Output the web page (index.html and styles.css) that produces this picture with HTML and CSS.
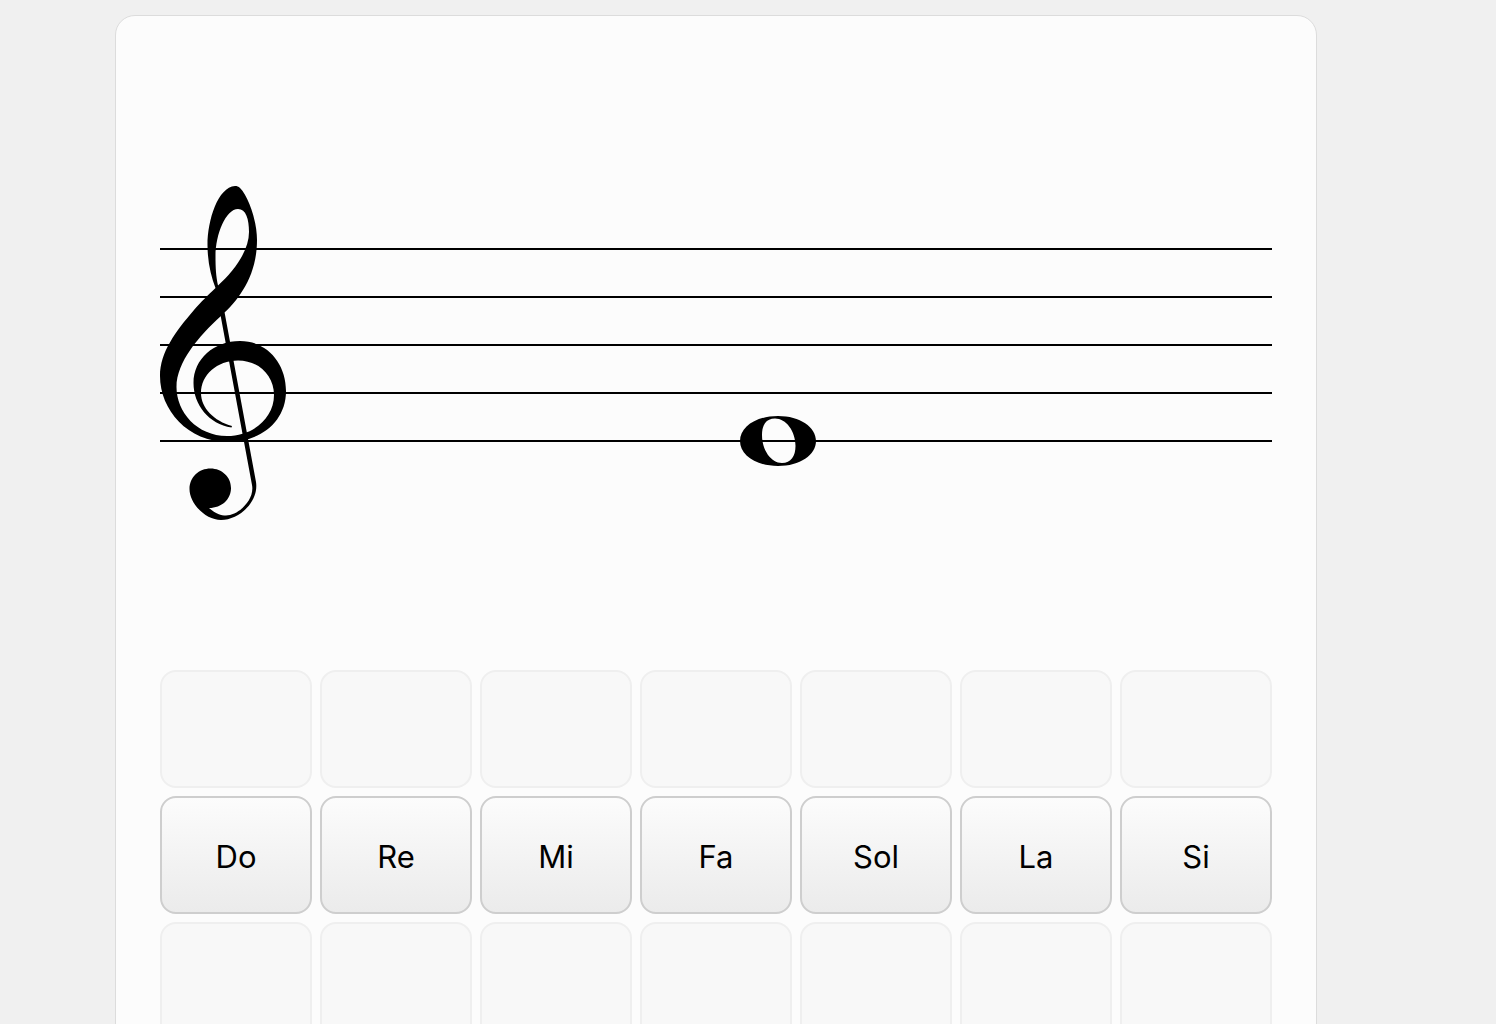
FILE: index.html
```
<!DOCTYPE html>
<html lang="es">
<head>
    <meta charset="UTF-8">
    <meta name="viewport" content="width=device-width, initial-scale=1.0">
    <title>Notas musicales</title>
    <link rel="stylesheet" href="styles.css">
</head>
<body>
    <main class="card">
        <svg class="staff" viewBox="160 60 1112 566" role="img" aria-label="Pentagrama en clave de sol">
            <!-- Pentagrama -->
            <path class="lines" d="M160 249H1272M160 297H1272M160 345H1272M160 393H1272M160 441H1272"/>

            <!-- Clave de sol -->
            <path fill-rule="evenodd" d="M235 186
                C218 187 207.500 220 207.500 245
                C207.500 262 211 276 215.500 288
                C209 294 200 303 194 310
                C176 331 160 352 160 376
                C160 410 188 442 228 442
                C260 442 286 422 286 391
                C286 363 267 341 240 341
                C214 341 193.500 359 193.500 383
                C193.500 405 209 424 231.500 427.500
                L232 426
                C214 421 201 408 201 393
                C201 375 217 360.500 238 360.500
                C259 360.500 274 376 274 395
                C274 418 253 436 227 436
                C197 436 176.500 412 176.500 387
                C176.500 362 199 336 221 316
                C240 299 257 275 257 240
                C257 220 248 196 240 188
                C238.500 186.500 237 186 235 186Z
                M238 209
                C246 209 249 219 249 232
                C249 251 234 271 218 285.500
                C216 276 215.500 268 215.500 256
                C215.500 234 226 209 238 209Z"/>
            <path d="M220.500 315L224.500 312L256 482C259 502 239 520 221 520
                C206 520 189.500 504 189.500 489
                C189.500 477 199 468.500 210.500 468.500
                C222 468.500 231 477 231 488
                C231 499 222 508 209 508
                C216 514 221 515.500 226 515.500
                C238 515.500 255 500 252 485Z"/>

            <!-- Redonda -->
            <path fill-rule="evenodd" d="M778 416C800 416 816 427 816 441C816 455 800 466 778 466C756 466 740 455 740 441C740 427 756 416 778 416Z
                M775 418.500C766 418.500 762 425 762 435C762 450 771 463 782 463C791 463 795.500 456 795.500 446C795.500 431 786 418.500 775 418.500Z"/>
        </svg>

        <div class="keys">
            <button disabled aria-label="Do sostenido"></button>
            <button disabled aria-label="Re sostenido"></button>
            <button disabled aria-label="Mi sostenido"></button>
            <button disabled aria-label="Fa sostenido"></button>
            <button disabled aria-label="Sol sostenido"></button>
            <button disabled aria-label="La sostenido"></button>
            <button disabled aria-label="Si sostenido"></button>

            <button>Do</button>
            <button>Re</button>
            <button>Mi</button>
            <button>Fa</button>
            <button>Sol</button>
            <button>La</button>
            <button>Si</button>

            <button disabled aria-label="Do bemol"></button>
            <button disabled aria-label="Re bemol"></button>
            <button disabled aria-label="Mi bemol"></button>
            <button disabled aria-label="Fa bemol"></button>
            <button disabled aria-label="Sol bemol"></button>
            <button disabled aria-label="La bemol"></button>
            <button disabled aria-label="Si bemol"></button>
        </div>
    </main>
</body>
</html>
```
FILE: styles.css
```
* {
    margin: 0;
    padding: 0;
    box-sizing: border-box;
    font-family: Inter, "Liberation Sans", sans-serif;
}

body {
    min-height: 100vh;
    padding: 15px 179px 15px 115px;
    background-color: #f0f0f0;
}

.card {
    padding: 44px;
    background-color: #fcfcfc;
    border: 1px solid #dcdcdc;
    border-radius: 20px;
}

.staff {
    display: block;
    width: 100%;
    margin-bottom: 44px;
}

.lines {
    stroke: #000;
    stroke-width: 2;
}

.keys {
    display: grid;
    grid-template-columns: repeat(7, 1fr);
    grid-auto-rows: 118px;
    gap: 8px;
}

button {
    padding-top: 2px;
    border: 2px solid #cecece;
    border-radius: 16px;
    background: linear-gradient(#fcfcfc, #ebebeb);
    color: #000;
    font-size: 31px;
    cursor: pointer;
}

button:active {
    background: #ebebeb;
}

button:disabled {
    border-color: #efefef;
    background: #f8f8f8;
    cursor: default;
}
```
